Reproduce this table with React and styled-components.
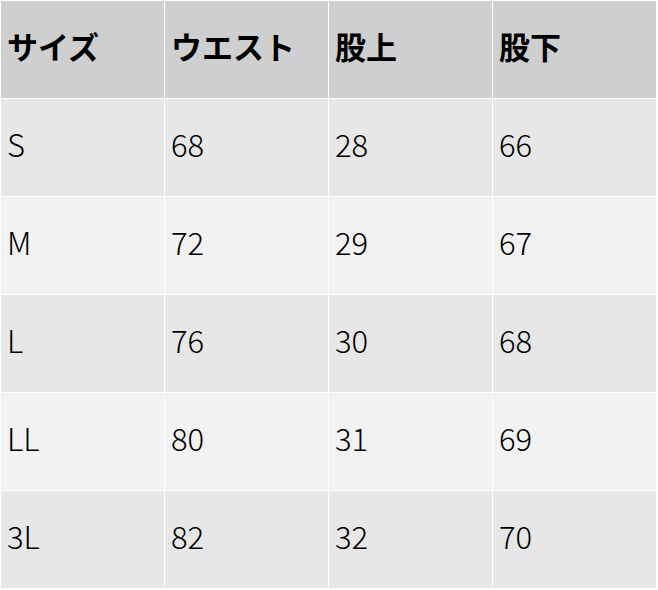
import React from "react";
import styled, { createGlobalStyle } from "styled-components";

const Global = createGlobalStyle`
  html, body { margin: 0; padding: 0; background: #ffffff; }
  body { font-family: "Noto Sans CJK JP", "Noto Sans", sans-serif; }
`;

const Table = styled.table`
  border-collapse: separate;
  border-spacing: 1px;
  background: #ffffff;
  table-layout: fixed;
  width: 657px;
`;

const Row = styled.tr`
  height: 97px;
`;

const HeadCell = styled.th`
  width: 163px;
  height: 97px;
  padding: 0 0 9px 6px;
  box-sizing: border-box;
  background: #cfcfcf;
  color: #000;
  font-size: 31px;
  line-height: 1;
  font-weight: 700;
  text-align: left;
  vertical-align: middle;
  white-space: nowrap;
`;

const Cell = styled.td`
  height: 97px;
  padding: 0 0 9px 6px;
  box-sizing: border-box;
  background: ${(p) => (p.$even ? "#f2f2f2" : "#e7e7e7")};
  color: #000;
  font-size: 31px;
  line-height: 1;
  font-weight: 300;
  text-align: left;
  vertical-align: middle;
  white-space: nowrap;
`;

const headers = ["サイズ", "ウエスト", "股上", "股下"];
const rows = [
  ["S", "68", "28", "66"],
  ["M", "72", "29", "67"],
  ["L", "76", "30", "68"],
  ["LL", "80", "31", "69"],
  ["3L", "82", "32", "70"],
];

export default function App() {
  return (
    <>
      <Global />
      <Table>
        <thead>
          <Row>
            {headers.map((h) => (
              <HeadCell key={h}>{h}</HeadCell>
            ))}
          </Row>
        </thead>
        <tbody>
          {rows.map((r, i) => (
            <Row key={r[0]}>
              {r.map((c, j) => (
                <Cell key={j} $even={i % 2 === 1}>
                  {c}
                </Cell>
              ))}
            </Row>
          ))}
        </tbody>
      </Table>
    </>
  );
}
